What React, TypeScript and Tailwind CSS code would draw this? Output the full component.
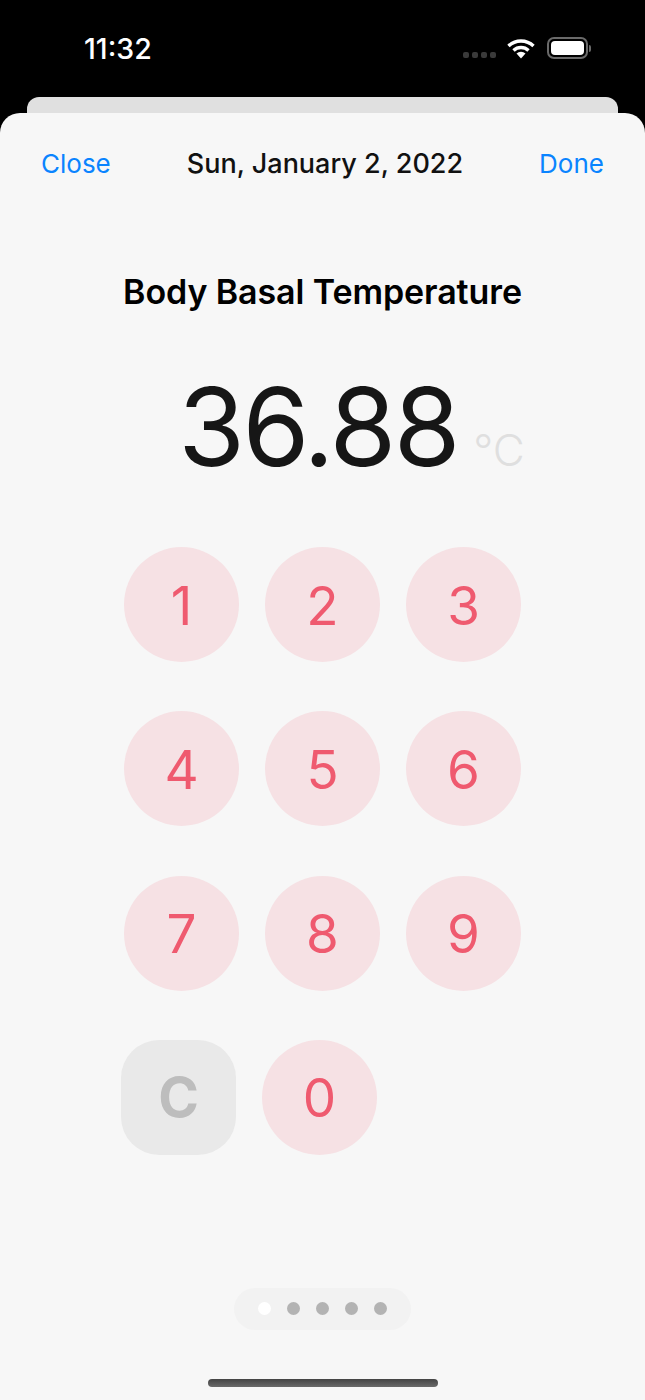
const KEYS = ['1', '2', '3', '4', '5', '6', '7', '8', '9']

function KeyButton({ label }: { label: string }) {
  return (
    <button className="flex h-[115px] w-[115px] items-center justify-center rounded-full bg-[#f6e1e4] pt-[3px] text-[53px] font-normal leading-none text-[#ef5a6f]">
      {label}
    </button>
  )
}

function StatusBar() {
  return (
    <div className="flex h-[97px] items-start bg-black">
      <span className="ml-[84px] mt-[33px] text-[28.5px] font-medium leading-[32px] text-white">11:32</span>
      <div className="ml-auto mr-[54px] mt-[37px] flex items-center">
        <div className="mt-[14px] flex gap-[3px]">
          <span className="h-[6px] w-[6px] rounded-[2px] bg-[#3a3a3a]" />
          <span className="h-[6px] w-[6px] rounded-[2px] bg-[#3a3a3a]" />
          <span className="h-[6px] w-[6px] rounded-[2px] bg-[#3a3a3a]" />
          <span className="h-[6px] w-[6px] rounded-[2px] bg-[#3a3a3a]" />
        </div>
        <svg className="ml-[11px]" width="28" height="21" viewBox="0 0 28 21" fill="none">
          <path d="M1.5 8 A18 18 0 0 1 26.5 8" stroke="white" strokeWidth="3.4" />
          <path d="M6.5 12.5 A11 11 0 0 1 21.5 12.5" stroke="white" strokeWidth="3.4" />
          <path d="M14 20.5 L9.5 15.5 A6.5 6.5 0 0 1 18.5 15.5 Z" fill="white" />
        </svg>
        <div className="ml-[12px] h-[22px] w-[41px] rounded-[7px] border-2 border-[#6a6a6a] p-[2px]">
          <div className="h-full w-full rounded-[4px] bg-white" />
        </div>
        <span className="ml-[1px] h-[7px] w-[2px] rounded-r-full bg-[#6a6a6a]" />
      </div>
    </div>
  )
}

export default function App() {
  return (
    <div className="flex h-[1400px] w-[645px] flex-col overflow-hidden bg-black font-['Inter',sans-serif]">
      <StatusBar />
      <div className="mx-[27px] h-[16px] rounded-t-[12px] bg-[#e0e0e0]" />
      <div className="flex flex-1 flex-col rounded-t-[20px] bg-[#f7f7f7]">
        <div className="flex items-center justify-between px-[41px] pt-[35px] text-[26px] leading-[32px]">
          <span className="text-[#0a84ff]">Close</span>
          <span className="text-[27px] font-medium text-[#111111]">Sun, January 2, 2022</span>
          <span className="text-[#0a84ff]">Done</span>
        </div>

        <h1 className="mt-[92px] text-center text-[34px] font-semibold leading-[40px] tracking-[-0.1px] text-black">
          Body Basal Temperature
        </h1>

        <div className="mt-[59px] flex h-[112px] items-baseline justify-center pl-[58px]">
          <span className="text-[108px] font-normal leading-[112px] tracking-[-2.5px] text-[#161616]">36.88</span>
          <span className="ml-[15px] text-[44px] font-light leading-none text-[#dfdfdf]">°C</span>
        </div>

        <div className="ml-[124px] mt-[64px] grid w-[397px] grid-cols-[115px_115px_115px] gap-x-[26px] gap-y-[49.3px]">
          {KEYS.map((k) => (
            <KeyButton key={k} label={k} />
          ))}
        </div>

        <div className="ml-[121px] mt-[49.3px] flex gap-[26px]">
          <button className="flex h-[115px] w-[115px] items-center justify-center rounded-[38px] bg-[#e9e9e9] text-[55px] font-bold leading-none text-[#bdbdbd]">
            C
          </button>
          <KeyButton label="0" />
        </div>

        <div className="mx-auto mt-[133px] flex h-[42px] w-[177px] items-center gap-[16px] rounded-full bg-[#f2f2f2] pl-[24px]">
          <span className="h-[13px] w-[13px] rounded-full bg-white" />
          <span className="h-[13px] w-[13px] rounded-full bg-[#b3b3b3]" />
          <span className="h-[13px] w-[13px] rounded-full bg-[#b3b3b3]" />
          <span className="h-[13px] w-[13px] rounded-full bg-[#b3b3b3]" />
          <span className="h-[13px] w-[13px] rounded-full bg-[#b3b3b3]" />
        </div>

        <div className="mx-auto mt-[49px] h-[8px] w-[230px] rounded-full bg-gradient-to-b from-[#444444] to-[#6a6a6a]" />
      </div>
    </div>
  )
}
